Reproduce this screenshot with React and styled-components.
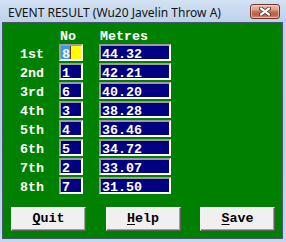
import React from "react";
import styled, { createGlobalStyle } from "styled-components";

const GlobalStyle = createGlobalStyle`
  html, body { margin: 0; padding: 0; background: #ffffff; }
  body { width: 286px; height: 242px; overflow: hidden; }
`;

const MONO = `"Liberation Mono", "DejaVu Sans Mono", monospace`;

const Window = styled.div`
  width: 286px;
  height: 242px;
  box-sizing: border-box;
  display: flex;
  flex-direction: column;
  padding: 0 3px 3px 2px;
  background: linear-gradient(180deg, #d3e2f4 0px, #bdd1ea 22px, #b9cfe9 60%, #c3d8ef 100%);
`;

const TitleBar = styled.div`
  height: 22px;
  flex: none;
  display: flex;
  align-items: flex-start;
  justify-content: space-between;
  padding-left: 6px;
`;

const Title = styled.div`
  padding-top: 5px;
  font-family: "Noto Sans", "Open Sans", sans-serif;
  font-size: 12px;
  line-height: 16px;
  color: #111;
  white-space: nowrap;
`;

const CloseButton = styled.div`
  width: 30px;
  height: 15px;
  margin-top: 4px;
  margin-right: 3px;
  box-sizing: border-box;
  border: 1px solid #6d3428;
  border-radius: 3px;
  background: linear-gradient(180deg, #ecbcae 0%, #dfa08f 35%, #c8735e 50%, #b85c47 72%, #cf8b77 100%);
  box-shadow: inset 0 0 0 1px rgba(255, 225, 215, 0.55);
  display: flex;
  align-items: center;
  justify-content: center;
`;

const Client = styled.div`
  flex: 1;
  background: #008000;
  border: 1px solid #46596f;
  padding-top: 7px;
  display: flex;
  flex-direction: column;
`;

const Table = styled.div`
  padding-left: 17px;
  display: flex;
  flex-direction: column;
`;

const Columns = styled.div`
  display: grid;
  grid-template-columns: 39px 40px 72px;
  height: ${(p) => p.$h}px;
`;

const HeadCell = styled.div`
  font-family: ${MONO};
  font-weight: bold;
  font-size: 13.33px;
  line-height: 14px;
  color: #ffffff;
  padding-left: 1px;
  white-space: pre;
`;

const Rows = styled.div`
  display: flex;
  flex-direction: column;
  gap: 2px;
`;

const Label = styled.div`
  font-family: ${MONO};
  font-weight: bold;
  font-size: 13.33px;
  line-height: 13px;
  padding-top: 4px;
  color: #ffffff;
  white-space: pre;
`;

const Field = styled.div`
  width: ${(p) => p.$w}px;
  height: 17px;
  box-sizing: border-box;
  border-style: solid;
  border-width: 2px;
  border-color: #9c9c9c #ffffff #ffffff #9c9c9c;
  background: ${(p) => (p.$editing ? "#ffff00" : "#000080")};
  display: flex;
  align-items: stretch;
  overflow: hidden;
`;

const FieldText = styled.span`
  font-family: ${MONO};
  font-weight: bold;
  font-size: 13.33px;
  line-height: 13px;
  padding: 2px 0 0 1px;
  color: #ffffff;
  white-space: pre;
`;

const Selected = styled.span`
  font-family: ${MONO};
  font-weight: bold;
  font-size: 13.33px;
  line-height: 13px;
  padding: 2px 0 0 1px;
  background: #3399ff;
  color: #ffffff;
  white-space: pre;
`;

const Caret = styled.span`
  width: 1px;
  background: #6a3526;
`;

const ButtonBar = styled.div`
  margin-top: 13px;
  padding: 0 7px 0 8px;
  display: flex;
  justify-content: space-between;
`;

const Button = styled.div`
  width: 75px;
  height: 24px;
  box-sizing: border-box;
  background: #f0f0f0;
  border-style: solid;
  border-width: 1px;
  border-color: #ffffff #5e5e5e #5e5e5e #ffffff;
  box-shadow: inset -1px -1px 0 #a0a0a0;
  display: flex;
  justify-content: center;
  font-family: ${MONO};
  font-weight: bold;
  font-size: 13.33px;
  line-height: 21px;
  color: #000000;
  u {
    text-decoration-thickness: 1px;
    text-underline-offset: 2px;
  }
`;

const results = [
  ["1st", "8", "44.32"],
  ["2nd", "1", "42.21"],
  ["3rd", "6", "40.20"],
  ["4th", "3", "38.28"],
  ["5th", "4", "36.46"],
  ["6th", "5", "34.72"],
  ["7th", "2", "33.07"],
  ["8th", "7", "31.50"],
];

function CloseGlyph() {
  return (
    <svg width="12" height="9" viewBox="0 0 12 9">
      <path d="M2 1.5 L10 7.5 M10 1.5 L2 7.5" stroke="#5a2a20" strokeWidth="4" strokeLinecap="round" />
      <path d="M2 1.5 L10 7.5 M10 1.5 L2 7.5" stroke="#ffffff" strokeWidth="2.2" strokeLinecap="round" />
    </svg>
  );
}

export default function App() {
  return (
    <>
      <GlobalStyle />
      <Window>
        <TitleBar>
          <Title>EVENT RESULT (Wu20 Javelin Throw A)</Title>
          <CloseButton>
            <CloseGlyph />
          </CloseButton>
        </TitleBar>
        <Client>
          <Table>
            <Columns $h={14}>
              <HeadCell />
              <HeadCell>No</HeadCell>
              <HeadCell>Metres</HeadCell>
            </Columns>
            <Rows>
              {results.map(([place, no, metres], i) => (
                <Columns key={place} $h={17}>
                  <Label>{place}</Label>
                  {i === 0 ? (
                    <Field $w={24} $editing>
                      <Selected>{no}</Selected>
                      <Caret />
                    </Field>
                  ) : (
                    <Field $w={24}>
                      <FieldText>{no}</FieldText>
                    </Field>
                  )}
                  <Field $w={72}>
                    <FieldText>{metres}</FieldText>
                  </Field>
                </Columns>
              ))}
            </Rows>
          </Table>
          <ButtonBar>
            <Button><u>Q</u>uit</Button>
            <Button><u>H</u>elp</Button>
            <Button><u>S</u>ave</Button>
          </ButtonBar>
        </Client>
      </Window>
    </>
  );
}
